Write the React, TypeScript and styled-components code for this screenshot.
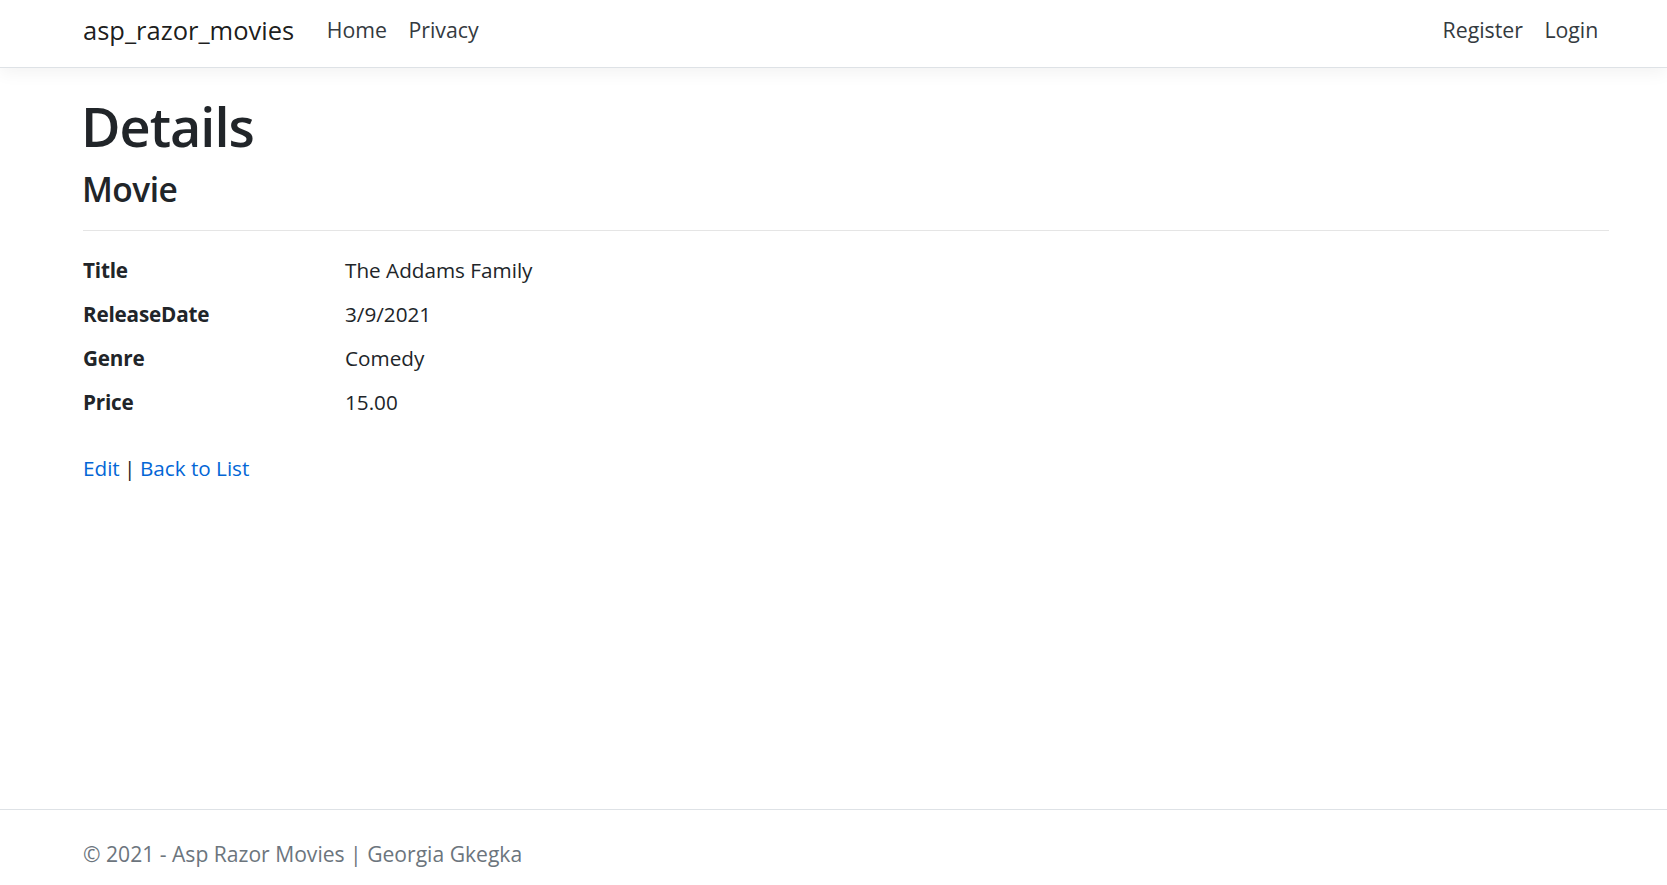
import React from 'react';
import styled, { createGlobalStyle } from 'styled-components';

const GlobalStyle = createGlobalStyle`
  html, body {
    margin: 0;
    padding: 0;
    background: #fff;
  }
  body {
    font-family: "Open Sans", "Noto Sans", sans-serif;
    color: #212529;
    font-size: 20.7px;
  }
  * {
    box-sizing: border-box;
  }
`;

const Page = styled.div`
  display: flex;
  flex-direction: column;
  min-height: 885px;
`;

const NavBar = styled.header`
  height: 68px;
  border-bottom: 1px solid #dee2e6;
  box-shadow: 0 5px 16px rgba(0, 0, 0, 0.05);
  background: #fff;
`;

const Container = styled.div`
  display: flex;
  align-items: center;
  height: 100%;
  padding: 0 58px 4px 83px;
`;

const Brand = styled.a`
  font-size: 25.5px;
  line-height: 40px;
  padding-bottom: 4px;
  color: rgba(0, 0, 0, 0.9);
  text-decoration: none;
  margin-right: 22px;
`;

const NavList = styled.nav<{ $right?: boolean }>`
  display: flex;
  margin-left: ${(p) => (p.$right ? 'auto' : '0')};
`;

const NavLink = styled.a`
  font-size: 21.3px;
  line-height: 32px;
  padding: 0 10.7px 3px;
  color: #343a40;
  text-decoration: none;
`;

const Main = styled.main`
  flex: 1;
  padding: 0 58px 0 83px;
`;

const Heading = styled.h1`
  font-size: 54px;
  font-weight: 600;
  letter-spacing: -1px;
  line-height: 64px;
  margin: 26px 0 0 -2px;
`;

const SubHeading = styled.h3`
  font-size: 33.5px;
  font-weight: 600;
  letter-spacing: -0.5px;
  line-height: 44px;
  margin: 9px 0 0 -1px;
`;

const Rule = styled.hr`
  border: 0;
  border-top: 1.3px solid rgba(0, 0, 0, 0.1);
  margin: 19px 0 23px;
`;

const DetailList = styled.dl`
  display: grid;
  grid-template-columns: 262px 1fr;
  row-gap: 12px;
  margin: 0 0 34px;
`;

const Term = styled.dt`
  font-weight: 700;
  letter-spacing: -0.2px;
  line-height: 32px;
`;

const Value = styled.dd`
  margin: 0;
  line-height: 32px;
`;

const Actions = styled.div`
  line-height: 32px;
`;

const Separator = styled.span`
  margin: 0 -1px;
`;

const Link = styled.a`
  color: #0366d6;
  text-decoration: none;
`;

const Footer = styled.footer`
  height: 76px;
  border-top: 1px solid #dee2e6;
  color: #6c757d;
  line-height: 32px;
  padding: 28px 0 0 83px;
  font-size: 21.1px;
`;

const details = [
  { label: 'Title', value: 'The Addams Family' },
  { label: 'ReleaseDate', value: '3/9/2021' },
  { label: 'Genre', value: 'Comedy' },
  { label: 'Price', value: '15.00' },
];

const App: React.FC = () => {
  return (
    <Page>
      <GlobalStyle />
      <NavBar>
        <Container>
          <Brand href="#">asp_razor_movies</Brand>
          <NavList>
            <NavLink href="#">Home</NavLink>
            <NavLink href="#">Privacy</NavLink>
          </NavList>
          <NavList $right>
            <NavLink href="#">Register</NavLink>
            <NavLink href="#">Login</NavLink>
          </NavList>
        </Container>
      </NavBar>
      <Main>
        <Heading>Details</Heading>
        <SubHeading>Movie</SubHeading>
        <Rule />
        <DetailList>
          {details.map((d) => (
            <React.Fragment key={d.label}>
              <Term>{d.label}</Term>
              <Value>{d.value}</Value>
            </React.Fragment>
          ))}
        </DetailList>
        <Actions>
          <Link href="#">Edit</Link>
          <Separator> | </Separator>
          <Link href="#">Back to List</Link>
        </Actions>
      </Main>
      <Footer>&copy; 2021 - Asp Razor Movies | Georgia Gkegka</Footer>
    </Page>
  );
};

export default App;
